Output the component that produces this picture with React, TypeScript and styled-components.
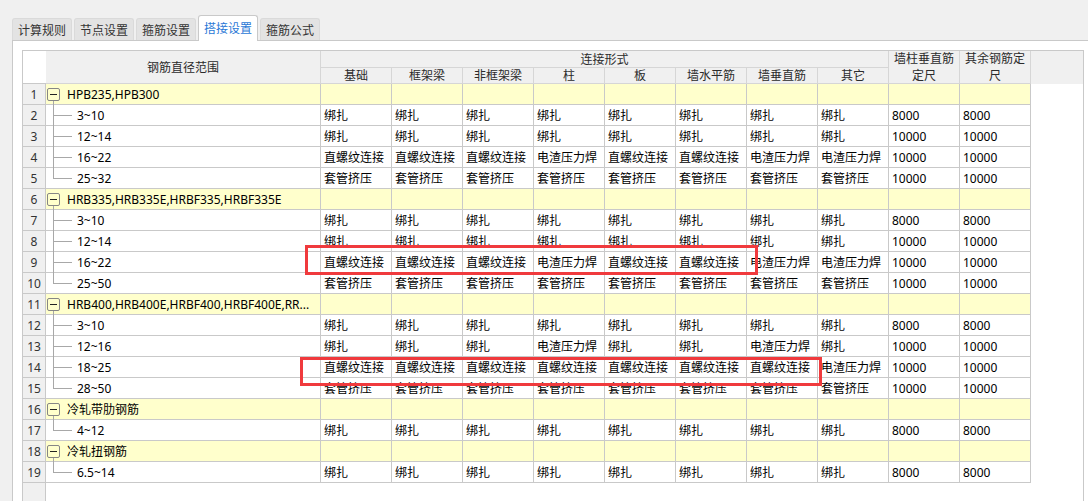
import React from 'react';
import styled, { createGlobalStyle } from 'styled-components';

const COLS = '23px 275px repeat(10, 71px) 1fr';
const LINE = '#c9c9c9';
const HEAD_LINE = '#d6d6d6';

const GlobalStyle = createGlobalStyle`
  html, body { margin: 0; padding: 0; background: #f0f0f0; overflow: hidden; }
  body {
    font-family: "Noto Sans", "Noto Sans CJK SC", sans-serif;
    font-size: 12px;
    color: #000;
  }
`;

const Page = styled.div`
  width: 1088px;
  height: 501px;
  overflow: hidden;
  box-sizing: border-box;
  padding: 15px 0 0 12px;
  display: flex;
  flex-direction: column;
`;

const TabBar = styled.div`
  display: flex;
  align-items: flex-end;
  gap: 2px;
  height: 25px;
  position: relative;
  z-index: 1;
`;

const Tab = styled.div<{ $active?: boolean }>`
  box-sizing: border-box;
  height: ${p => (p.$active ? '26px' : '22px')};
  margin-bottom: ${p => (p.$active ? '-1px' : '0')};
  padding: 0 5px;
  display: flex;
  align-items: center;
  justify-content: center;
  border: 1px solid ${p => (p.$active ? LINE : '#dadada')};
  border-bottom: none;
  border-radius: 3px 3px 0 0;
  background: ${p => (p.$active ? '#fff' : '#e3e3e3')};
  color: ${p => (p.$active ? '#2a78d6' : '#333')};
  padding-bottom: ${p => (p.$active ? '1px' : '0')};
  white-space: nowrap;
`;

const Panel = styled.div`
  flex: 1;
  min-height: 0;
  background: #fff;
  border-top: 1px solid ${LINE};
  border-left: 1px solid ${LINE};
  padding: 9px 0 0 9px;
  display: flex;
  flex-direction: column;
`;

const GridBox = styled.div`
  position: relative;
  width: 1062px;
  height: 470px;
  flex: none;
  box-sizing: border-box;
  border: 1px solid ${LINE};
  background: #fff;
  display: flex;
  flex-direction: column;
`;

const Header = styled.div`
  display: grid;
  grid-template-columns: ${COLS};
  grid-template-rows: 17px 16px;
  background: #f0f0f0;
`;

const HeadCell = styled.div<{ $col: string; $row: string }>`
  grid-column: ${p => p.$col};
  grid-row: ${p => p.$row};
  box-sizing: border-box;
  border-right: 1px solid ${HEAD_LINE};
  border-bottom: 1px solid ${HEAD_LINE};
  display: flex;
  align-items: center;
  justify-content: center;
  text-align: center;
  line-height: 17px;
  color: #2b2b2b;
  overflow: hidden;
`;

const Corner = styled.div`
  grid-column: 1;
  grid-row: 1 / span 2;
  background: #fff;
  border-bottom: 1px solid ${LINE};
`;

const HeadFill = styled.div`
  grid-column: 13;
  grid-row: 1 / span 2;
  background: #f0f0f0;
`;

const Body = styled.div`
  display: grid;
  grid-template-columns: ${COLS};
  grid-auto-rows: 21px;
`;

const NumCell = styled.div`
  box-sizing: border-box;
  background: #f0f0f0;
  border-right: 1px solid ${LINE};
  border-bottom: 1px solid ${LINE};
  display: flex;
  align-items: center;
  justify-content: center;
  color: #333;
`;

const Cell = styled.div<{ $group?: boolean }>`
  box-sizing: border-box;
  background: ${p => (p.$group ? '#ffffcc' : '#fff')};
  border-right: 1px solid ${LINE};
  border-bottom: 1px solid ${LINE};
  padding-left: 3px;
  display: flex;
  align-items: center;
  white-space: nowrap;
  overflow: hidden;
`;

const RangeCell = styled(Cell)`
  padding-left: 1px;
  overflow: visible;
  position: relative;
`;

const RowEnd = styled.div``;

const Toggle = styled.span`
  position: relative;
  box-sizing: border-box;
  width: 13px;
  height: 13px;
  flex: none;
  border: 1px solid #868686;
  border-radius: 2px;
  display: flex;
  align-items: center;
  justify-content: center;
  &::before {
    content: '';
    width: 7px;
    height: 1px;
    background: #222;
  }
  &::after {
    content: '';
    position: absolute;
    left: 5px;
    top: 12px;
    width: 1px;
    height: 4px;
    background: #a8a8a8;
  }
`;

const GroupLabel = styled.span`
  margin-left: 7px;
`;

const Branch = styled.span<{ $last?: boolean }>`
  position: relative;
  align-self: stretch;
  width: 30px;
  flex: none;
  &::before {
    content: '';
    position: absolute;
    left: 6px;
    top: -1px;
    width: 1px;
    ${p => (p.$last ? 'height: calc(50% + 1px);' : 'bottom: -1px;')}
    background: #a8a8a8;
  }
  &::after {
    content: '';
    position: absolute;
    left: 6px;
    top: 50%;
    width: 19px;
    height: 1px;
    background: #a8a8a8;
  }
`;

const BottomFill = styled.div`
  flex: 1;
  display: grid;
  grid-template-columns: ${COLS};
`;

const NumFill = styled.div`
  background: #f0f0f0;
  border-right: 1px solid ${LINE};
`;

const Mark = styled.div<{ $x: number; $y: number; $w: number; $h: number }>`
  position: absolute;
  left: ${p => p.$x}px;
  top: ${p => p.$y}px;
  width: ${p => p.$w}px;
  height: ${p => p.$h}px;
  box-sizing: border-box;
  border: 3px solid #f03a3d;
  pointer-events: none;
`;

const tabs = ['计算规则', '节点设置', '箍筋设置', '搭接设置', '箍筋公式'];
const joinCols = ['基础', '框架梁', '非框架梁', '柱', '板', '墙水平筋', '墙垂直筋', '其它'];

type Row =
  | { kind: 'group'; label: string }
  | { kind: 'item'; label: string; cells: string[]; last?: boolean };

const B = '绑扎';
const Z = '直螺纹连接';
const D = '电渣压力焊';
const T = '套管挤压';
const all = (v: string) => Array(8).fill(v) as string[];

const rows: Row[] = [
  { kind: 'group', label: 'HPB235,HPB300' },
  { kind: 'item', label: '3~10', cells: [...all(B), '8000', '8000'] },
  { kind: 'item', label: '12~14', cells: [...all(B), '10000', '10000'] },
  { kind: 'item', label: '16~22', cells: [Z, Z, Z, D, Z, Z, D, D, '10000', '10000'] },
  { kind: 'item', label: '25~32', cells: [...all(T), '10000', '10000'], last: true },
  { kind: 'group', label: 'HRB335,HRB335E,HRBF335,HRBF335E' },
  { kind: 'item', label: '3~10', cells: [...all(B), '8000', '8000'] },
  { kind: 'item', label: '12~14', cells: [...all(B), '10000', '10000'] },
  { kind: 'item', label: '16~22', cells: [Z, Z, Z, D, Z, Z, D, D, '10000', '10000'] },
  { kind: 'item', label: '25~50', cells: [...all(T), '10000', '10000'], last: true },
  { kind: 'group', label: 'HRB400,HRB400E,HRBF400,HRBF400E,RR...' },
  { kind: 'item', label: '3~10', cells: [...all(B), '8000', '8000'] },
  { kind: 'item', label: '12~16', cells: [B, B, B, D, B, B, D, B, '10000', '10000'] },
  { kind: 'item', label: '18~25', cells: [Z, Z, Z, Z, Z, Z, Z, D, '10000', '10000'] },
  { kind: 'item', label: '28~50', cells: [...all(T), '10000', '10000'], last: true },
  { kind: 'group', label: '冷轧带肋钢筋' },
  { kind: 'item', label: '4~12', cells: [...all(B), '8000', '8000'], last: true },
  { kind: 'group', label: '冷轧扭钢筋' },
  { kind: 'item', label: '6.5~14', cells: [...all(B), '8000', '8000'], last: true },
];

export default function App() {
  return (
    <>
      <GlobalStyle />
      <Page>
        <TabBar>
          {tabs.map(t => (
            <Tab key={t} $active={t === '搭接设置'}>
              {t}
            </Tab>
          ))}
        </TabBar>
        <Panel>
          <GridBox>
            <Header>
              <Corner />
              <HeadCell $col="2" $row="1 / span 2">钢筋直径范围</HeadCell>
              <HeadCell $col="3 / span 8" $row="1">连接形式</HeadCell>
              {joinCols.map((c, i) => (
                <HeadCell key={c} $col={String(3 + i)} $row="2">
                  {c}
                </HeadCell>
              ))}
              <HeadCell $col="11" $row="1 / span 2">墙柱垂直筋定尺</HeadCell>
              <HeadCell $col="12" $row="1 / span 2">其余钢筋定尺</HeadCell>
              <HeadFill />
            </Header>
            <Body>
              {rows.map((r, i) => (
                <React.Fragment key={i}>
                  <NumCell>{i + 1}</NumCell>
                  {r.kind === 'group' ? (
                    <>
                      <RangeCell $group>
                        <Toggle />
                        <GroupLabel>{r.label}</GroupLabel>
                      </RangeCell>
                      {Array.from({ length: 10 }).map((_, j) => (
                        <Cell key={j} $group />
                      ))}
                    </>
                  ) : (
                    <>
                      <RangeCell>
                        <Branch $last={r.last} />
                        {r.label}
                      </RangeCell>
                      {r.cells.map((c, j) => (
                        <Cell key={j}>{c}</Cell>
                      ))}
                    </>
                  )}
                  <RowEnd />
                </React.Fragment>
              ))}
            </Body>
            <BottomFill>
              <NumFill />
            </BottomFill>
            <Mark $x={282} $y={194} $w={453} $h={30} />
            <Mark $x={277} $y={306} $w={522} $h={29} />
          </GridBox>
        </Panel>
      </Page>
    </>
  );
}
